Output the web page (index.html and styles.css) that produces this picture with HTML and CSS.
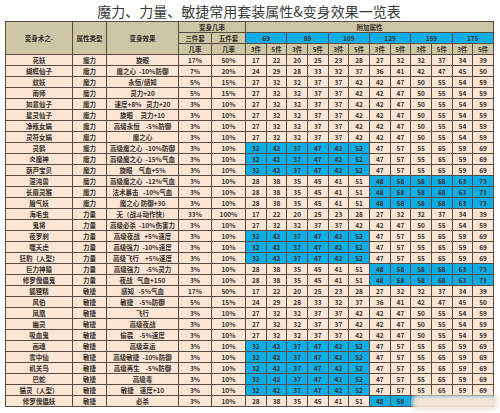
FILE: index.html
```html
<!DOCTYPE html>
<html lang="zh">
<head>
<meta charset="utf-8">
<link rel="stylesheet" href="styles.css">
</head>
<body>
<div class="page">
<h1 class="title">魔力、力量、敏捷常用套装属性&amp;变身效果一览表</h1>
<table class="sheet">
<colgroup>
<col class="c-name"><col class="c-type"><col class="c-eff"><col class="c-rate"><col class="c-rate2">
<col class="c-n"><col class="c-n"><col class="c-n"><col class="c-n"><col class="c-n"><col class="c-n">
<col class="c-n"><col class="c-n"><col class="c-n"><col class="c-n"><col class="c-n"><col class="c-n">
</colgroup>
<thead>
<tr><th rowspan="3">变身术之-</th><th rowspan="3">属性类型</th><th rowspan="3">变身效果</th><th colspan="2">变身几率</th><th colspan="12">附加属性</th></tr>
<tr><th>三件套</th><th>五件套</th><th class="lv" colspan="2">69</th><th class="lv" colspan="2">89</th><th class="lv" colspan="2">109</th><th class="lv" colspan="2">129</th><th class="lv" colspan="2">159</th><th class="lv" colspan="2">175</th></tr>
<tr><th>几率</th><th>几率</th><th>3件</th><th>5件</th><th>3件</th><th>5件</th><th>3件</th><th>5件</th><th>3件</th><th>5件</th><th>3件</th><th>5件</th><th>3件</th><th>5件</th></tr>
</thead>
<tbody>
<tr><td>花妖</td><td>魔力</td><td>旋眼</td><td>17%</td><td>50%</td><td>17</td><td>22</td><td>20</td><td>25</td><td>23</td><td>28</td><td>27</td><td>32</td><td>32</td><td>37</td><td>34</td><td>39</td></tr>
<tr><td>蝴蝶仙子</td><td>魔力</td><td>魔之心&nbsp;&nbsp;-10%防御</td><td>7%</td><td>20%</td><td>24</td><td>29</td><td>28</td><td>33</td><td>32</td><td>37</td><td>36</td><td>41</td><td>42</td><td>47</td><td>45</td><td>50</td></tr>
<tr><td>蚊妖</td><td>魔力</td><td>永恒/感知</td><td>5%</td><td>15%</td><td>27</td><td>32</td><td>32</td><td>37</td><td>37</td><td>42</td><td>42</td><td>47</td><td>50</td><td>55</td><td>54</td><td>59</td></tr>
<tr><td>雨师</td><td>魔力</td><td>灵力+20</td><td>5%</td><td>15%</td><td>27</td><td>32</td><td>32</td><td>37</td><td>37</td><td>42</td><td>42</td><td>47</td><td>50</td><td>55</td><td>54</td><td>59</td></tr>
<tr><td>如意仙子</td><td>魔力</td><td>速度+8%&nbsp;&nbsp;&nbsp;灵力+20</td><td>3%</td><td>10%</td><td>27</td><td>32</td><td>32</td><td>37</td><td>37</td><td>42</td><td>42</td><td>47</td><td>50</td><td>55</td><td>54</td><td>59</td></tr>
<tr><td>星灵仙子</td><td>魔力</td><td>旋眼&nbsp;&nbsp;&nbsp;&nbsp;&nbsp;灵力+10</td><td>3%</td><td>10%</td><td>27</td><td>32</td><td>32</td><td>37</td><td>37</td><td>42</td><td>42</td><td>47</td><td>50</td><td>55</td><td>54</td><td>59</td></tr>
<tr><td>净瓶女娲</td><td>魔力</td><td>高级永恒&nbsp;&nbsp;&nbsp;&nbsp;-5%防御</td><td>3%</td><td>10%</td><td>27</td><td>32</td><td>32</td><td>37</td><td>37</td><td>42</td><td>42</td><td>47</td><td>50</td><td>55</td><td>54</td><td>59</td></tr>
<tr><td>灵符女娲</td><td>魔力</td><td>魔之心</td><td>3%</td><td>10%</td><td>27</td><td>32</td><td>32</td><td>37</td><td>37</td><td>42</td><td>42</td><td>47</td><td>50</td><td>55</td><td>54</td><td>59</td></tr>
<tr><td>灵鹤</td><td>魔力</td><td>高级魔之心&nbsp;&nbsp;-10%防御</td><td>3%</td><td>10%</td><td class="b">32</td><td class="b">42</td><td class="b">37</td><td class="b">47</td><td class="b">42</td><td class="b">52</td><td>47</td><td>57</td><td>55</td><td>65</td><td>59</td><td>69</td></tr>
<tr><td>炎魔神</td><td>魔力</td><td>高级魔之心&nbsp;&nbsp;-15%气血</td><td>3%</td><td>10%</td><td class="b">32</td><td class="b">42</td><td class="b">37</td><td class="b">47</td><td class="b">42</td><td class="b">52</td><td>47</td><td>57</td><td>55</td><td>65</td><td>59</td><td>69</td></tr>
<tr><td>葫芦宝贝</td><td>魔力</td><td>旋眼&nbsp;&nbsp;&nbsp;&nbsp;气血+5%</td><td>3%</td><td>10%</td><td class="b">32</td><td class="b">42</td><td class="b">37</td><td class="b">47</td><td class="b">42</td><td class="b">52</td><td>47</td><td>57</td><td>55</td><td>65</td><td>59</td><td>69</td></tr>
<tr><td>混沌兽</td><td>魔力</td><td>高级魔之心&nbsp;&nbsp;-12%气血</td><td>3%</td><td>10%</td><td>28</td><td>38</td><td>35</td><td>45</td><td>41</td><td>51</td><td class="b">48</td><td class="b">58</td><td class="b">58</td><td class="b">68</td><td class="b">63</td><td class="b">73</td></tr>
<tr><td>长眉灵猴</td><td>魔力</td><td>法术暴击&nbsp;&nbsp;&nbsp;-10%气血</td><td>3%</td><td>10%</td><td>28</td><td>38</td><td>35</td><td>45</td><td>41</td><td>51</td><td class="b">48</td><td class="b">58</td><td class="b">58</td><td class="b">68</td><td class="b">63</td><td class="b">73</td></tr>
<tr><td>蜃气妖</td><td>魔力</td><td>魔之心&nbsp;防御+30</td><td>3%</td><td>10%</td><td>28</td><td>38</td><td>35</td><td>45</td><td>41</td><td>51</td><td class="b">48</td><td class="b">58</td><td class="b">58</td><td class="b">68</td><td class="b">63</td><td class="b">73</td></tr>
<tr><td>海毛虫</td><td>力量</td><td>无（战斗动作快）</td><td>33%</td><td>100%</td><td>17</td><td>22</td><td>20</td><td>25</td><td>23</td><td>28</td><td>27</td><td>32</td><td>32</td><td>37</td><td>34</td><td>39</td></tr>
<tr><td>鬼将</td><td>力量</td><td>高级必杀&nbsp;&nbsp;-10%伤害力</td><td>3%</td><td>10%</td><td>27</td><td>32</td><td>32</td><td>37</td><td>37</td><td>42</td><td>42</td><td>47</td><td>50</td><td>55</td><td>54</td><td>59</td></tr>
<tr><td>夜罗刹</td><td>力量</td><td>高级夜战&nbsp;&nbsp;&nbsp;+5%速度</td><td>3%</td><td>10%</td><td class="b">32</td><td class="b">42</td><td class="b">37</td><td class="b">47</td><td class="b">42</td><td class="b">52</td><td>47</td><td>57</td><td>55</td><td>65</td><td>59</td><td>69</td></tr>
<tr><td>噬天虎</td><td>力量</td><td>高级强力&nbsp;&nbsp;-10%速度</td><td>3%</td><td>10%</td><td class="b">32</td><td class="b">42</td><td class="b">37</td><td class="b">47</td><td class="b">42</td><td class="b">52</td><td>47</td><td>57</td><td>55</td><td>65</td><td>59</td><td>69</td></tr>
<tr><td>狂豹（人型）</td><td>力量</td><td>高级飞行&nbsp;&nbsp;&nbsp;&nbsp;+5%速度</td><td>3%</td><td>10%</td><td class="b">32</td><td class="b">42</td><td class="b">37</td><td class="b">47</td><td class="b">42</td><td class="b">52</td><td>47</td><td>57</td><td>55</td><td>65</td><td>59</td><td>69</td></tr>
<tr><td>巨力神猿</td><td>力量</td><td>高级强力&nbsp;&nbsp;&nbsp;&nbsp;-5%灵力</td><td>3%</td><td>10%</td><td>28</td><td>38</td><td>35</td><td>45</td><td>41</td><td>51</td><td class="b">48</td><td class="b">58</td><td class="b">58</td><td class="b">68</td><td class="b">63</td><td class="b">73</td></tr>
<tr><td>修罗傀儡鬼</td><td>力量</td><td>夜战&nbsp;&nbsp;&nbsp;气血+150</td><td>3%</td><td>10%</td><td>28</td><td>38</td><td>35</td><td>45</td><td>41</td><td>51</td><td class="b">48</td><td class="b">58</td><td class="b">58</td><td class="b">68</td><td class="b">63</td><td class="b">73</td></tr>
<tr><td>狐狸精</td><td>敏捷</td><td>感知&nbsp;&nbsp;&nbsp;-5%气血</td><td>17%</td><td>50%</td><td>17</td><td>22</td><td>20</td><td>25</td><td>23</td><td>28</td><td>27</td><td>32</td><td>32</td><td>37</td><td>34</td><td>39</td></tr>
<tr><td>风伯</td><td>敏捷</td><td>敏捷&nbsp;&nbsp;&nbsp;&nbsp;-5%防御</td><td>5%</td><td>15%</td><td>24</td><td>29</td><td>28</td><td>33</td><td>32</td><td>37</td><td>36</td><td>41</td><td>42</td><td>47</td><td>45</td><td>50</td></tr>
<tr><td>凤凰</td><td>敏捷</td><td>飞行</td><td>3%</td><td>10%</td><td>27</td><td>32</td><td>32</td><td>37</td><td>37</td><td>42</td><td>42</td><td>47</td><td>50</td><td>55</td><td>54</td><td>59</td></tr>
<tr><td>幽灵</td><td>敏捷</td><td>高级夜战</td><td>3%</td><td>10%</td><td>27</td><td>32</td><td>32</td><td>37</td><td>37</td><td>42</td><td>42</td><td>47</td><td>50</td><td>55</td><td>54</td><td>59</td></tr>
<tr><td>吸血鬼</td><td>敏捷</td><td>偷袭&nbsp;&nbsp;&nbsp;&nbsp;-5%速度</td><td>3%</td><td>10%</td><td>27</td><td>32</td><td>32</td><td>37</td><td>37</td><td>42</td><td>42</td><td>47</td><td>50</td><td>55</td><td>54</td><td>59</td></tr>
<tr><td>画魂</td><td>敏捷</td><td>高级幸运</td><td>3%</td><td>10%</td><td class="b">32</td><td class="b">42</td><td class="b">37</td><td class="b">47</td><td class="b">42</td><td class="b">52</td><td>47</td><td>57</td><td>55</td><td>65</td><td>59</td><td>69</td></tr>
<tr><td>雾中仙</td><td>敏捷</td><td>高级敏捷&nbsp;&nbsp;-10%防御</td><td>3%</td><td>10%</td><td class="b">32</td><td class="b">42</td><td class="b">37</td><td class="b">47</td><td class="b">42</td><td class="b">52</td><td>47</td><td>57</td><td>55</td><td>65</td><td>59</td><td>69</td></tr>
<tr><td>机关鸟</td><td>敏捷</td><td>高级再生&nbsp;&nbsp;&nbsp;&nbsp;-5%防御</td><td>3%</td><td>10%</td><td class="b">32</td><td class="b">42</td><td class="b">37</td><td class="b">47</td><td class="b">42</td><td class="b">52</td><td>47</td><td>57</td><td>55</td><td>65</td><td>59</td><td>69</td></tr>
<tr><td>巴蛇</td><td>敏捷</td><td>高级毒</td><td>3%</td><td>10%</td><td class="b">32</td><td class="b">42</td><td class="b">37</td><td class="b">47</td><td class="b">42</td><td class="b">52</td><td>47</td><td>57</td><td>55</td><td>65</td><td>59</td><td>69</td></tr>
<tr><td>猫灵（人型）</td><td>敏捷</td><td>敏捷&nbsp;&nbsp;&nbsp;&nbsp;速度+10</td><td>3%</td><td>10%</td><td class="b">32</td><td class="b">42</td><td class="b">37</td><td class="b">47</td><td class="b">42</td><td class="b">52</td><td>47</td><td>57</td><td>55</td><td>65</td><td>59</td><td>69</td></tr>
<tr><td>修罗傀儡妖</td><td>敏捷</td><td>必杀</td><td>3%</td><td>10%</td><td>28</td><td>38</td><td>35</td><td>45</td><td>41</td><td>51</td><td class="b">48</td><td class="b">58</td><td class="b">58</td><td class="b">68</td><td class="b">63</td><td class="b">73</td></tr>
</tbody>
</table>
<div class="watermark"></div>
</div>
</body>
</html>
```
FILE: styles.css
```css
html, body {
  margin: 0;
  padding: 0;
  background: #ffffff;
}
.page {
  position: relative;
  width: 500px;
  height: 413px;
  padding: 0 0 0 5px;
  box-sizing: border-box;
  font-family: "Noto Sans CJK SC", "Noto Sans", sans-serif;
}
.title {
  margin: 0;
  width: 488px;
  height: 21px;
  line-height: 23px;
  font-size: 14px;
  font-weight: 400;
  color: #3a3a3a;
  text-align: center;
}
.sheet {
  border-collapse: collapse;
  table-layout: fixed;
  width: 488px;
  border: 1px solid #3f3832;
}
.c-name { width: 67px; }
.c-type { width: 34px; }
.c-eff { width: 72px; }
.c-rate { width: 33px; }
.c-rate2 { width: 34px; }
.c-n { width: 20.67px; }
.sheet tr {
  height: 11px;
}
.sheet th,
.sheet td {
  padding: 0;
  height: 10px;
  line-height: 10px;
  font-size: 6.5px;
  font-weight: 700;
  color: #352f2a;
  text-align: center;
  white-space: nowrap;
  overflow: hidden;
  border: 1px solid #564c44;
}
.sheet th {
  background: #cdc7a6;
}
.sheet th.lv {
  background: #12aee6;
}
.sheet td {
  background: #fbe6d6;
}
.sheet td.b {
  background: #0fade6;
}
.watermark {
  position: absolute;
  left: 412px;
  top: 395px;
  width: 86px;
  height: 15px;
  background: #f1e3d8;
  border-radius: 6px;
  filter: blur(2px);
}
```
